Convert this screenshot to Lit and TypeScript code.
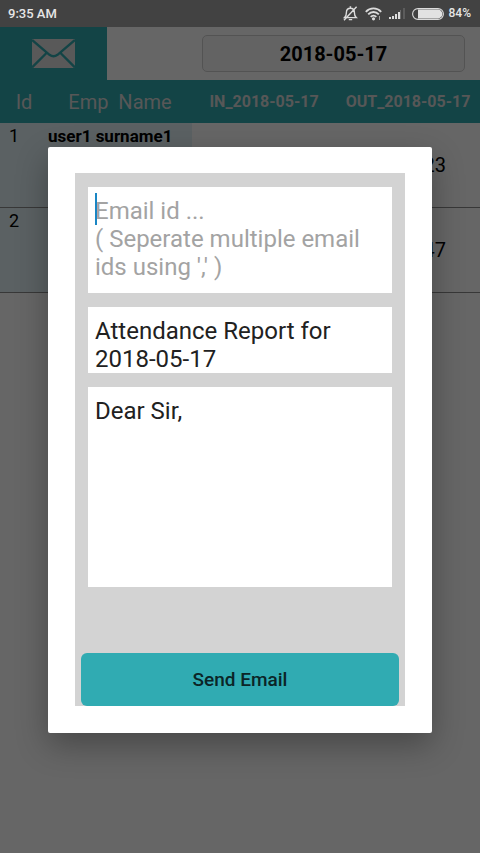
import { LitElement, html, css, svg } from "lit";
import { customElement, state } from "lit/decorators.js";

interface Row {
  id: number;
  name: string;
  inTime: string;
  outTime: string;
}

@customElement("status-bar")
export class StatusBar extends LitElement {
  static styles = css`
    :host {
      display: flex;
      align-items: center;
      justify-content: space-between;
      height: 27px;
      padding: 0 9px 0 8px;
      background: #424242;
      color: #e6e6e6;
      font: 500 12px/27px Roboto, sans-serif;
    }
    .time {
      font-size: 13px;
    }
    .icons {
      display: flex;
      align-items: center;
    }
    svg {
      display: block;
    }
    .bell,
    .wifi,
    .signal {
      margin-right: 7px;
    }
    .battery {
      margin-right: 5px;
    }
  `;

  render() {
    return html`
      <span class="time">9:35 AM</span>
      <div class="icons">
        <svg class="bell" width="15" height="15" viewBox="0 0 15 15" fill="none" stroke="#dcdcdc" stroke-width="1.4">
          <path d="M1.6 11.6C3 10.4 3.4 9.4 3.4 6.6C3.4 3.9 5 2.2 7.4 2.2C9.8 2.2 11.4 3.9 11.4 6.6C11.4 9.4 11.8 10.4 13.2 11.6Z M5.8 13.6H9.2 M6.6 1H8.2 M13.6 0.8L1 14.2" />
        </svg>
        <svg class="wifi" width="17" height="14" viewBox="0 0 17 14" fill="none" stroke="#dcdcdc" stroke-width="1.8">
          <path d="M0.8 4.8C5 0.3 12 0.3 16.2 4.8M3.2 7.4C6.2 4.2 10.8 4.2 13.8 7.4M5.7 9.9C7.3 8.2 9.7 8.2 11.3 9.9" />
          <circle cx="8.5" cy="11.8" r="1.6" fill="#dcdcdc" stroke="none" />
          <path d="M14.5 9V13" stroke-width="1" stroke="#a0a0a0" />
        </svg>
        <svg class="signal" width="16" height="12" viewBox="0 0 16 12">
          ${[2, 3, 5, 7].map(
            (h, i) => svg`<rect x=${i * 3} y=${11 - h} width="2" height=${h} fill="#dcdcdc" />`
          )}
          <rect x="11" y="2" width="1" height="9" fill="#6c6c6c" />
          <rect x="14" y="0" width="2" height="11" fill="#5c5c5c" />
        </svg>
        <svg class="battery" width="32" height="12" viewBox="0 0 32 12">
          <rect x="0.6" y="0.6" width="30.8" height="10.8" rx="5.4" fill="none" stroke="#dcdcdc" stroke-width="1.1" />
          <path d="M6 1.6H26A4.4 4.4 0 0 1 26 10.4H6Z" fill="#e2e2e2" />
        </svg>
        <span>84%</span>
      </div>
    `;
  }
}

@customElement("attendance-page")
export class AttendancePage extends LitElement {
  static styles = css`
    :host {
      display: block;
      background: #fff;
      font-family: Roboto, sans-serif;
      color: #000;
    }
    .toolbar {
      display: flex;
      justify-content: space-between;
      align-items: center;
      height: 53px;
      padding-right: 15px;
    }
    button {
      border: 0;
      padding: 0;
      font-family: inherit;
      color: inherit;
    }
    .mail {
      display: flex;
      align-items: center;
      justify-content: center;
      width: 107px;
      height: 53px;
      background: #30aab0;
    }
    .date {
      width: 263px;
      height: 37px;
      box-sizing: border-box;
      border: 1px solid #d0d0d0;
      border-radius: 5px;
      background: #f7f7f7;
      font-size: 20px;
      font-weight: 700;
    }
    table {
      width: 100%;
      table-layout: fixed;
      border-collapse: collapse;
    }
    th {
      height: 43px;
      padding: 0;
      background: #30aab0;
      color: #d9d9d9;
      font-size: 16px;
      font-weight: 700;
      white-space: pre;
    }
    th.plain {
      font-size: 20px;
      font-weight: 400;
    }
    .w-id {
      width: 10%;
    }
    td {
      height: 84px;
      padding: 0;
      border-bottom: 1px solid #8c8c8c;
      font-size: 20px;
      text-align: right;
      padding-right: 34px;
    }
    td.key {
      padding: 0;
      background: #e4f3f7;
      font-size: 18px;
      line-height: 26px;
      vertical-align: top;
      text-align: left;
    }
    td.id {
      padding-left: 9px;
    }
    td.name {
      font-size: 17px;
      font-weight: 700;
    }
  `;

  private date = "2018-05-17";
  private rows: Row[] = [
    { id: 1, name: "user1 surname1", inTime: "", outTime: "23" },
    { id: 2, name: "", inTime: "", outTime: "47" },
  ];

  render() {
    return html`
      <div class="toolbar">
        <button class="mail" aria-label="Email report">
          <svg width="43" height="29" viewBox="0 0 43 29">
            <rect width="43" height="29" fill="#dedede" />
            <path d="M0 1L17.5 15.8Q21.5 18.8 25.5 15.8L43 1M0 28.5L14.5 14M43 28.5L28.5 14" fill="none" stroke="#30aab0" stroke-width="2.4" />
          </svg>
        </button>
        <button class="date">${this.date}</button>
      </div>
      <table>
        <thead>
          <tr>
            <th class="plain w-id">Id</th>
            <th class="plain">Emp  Name</th>
            <th>IN_${this.date}</th>
            <th>OUT_${this.date}</th>
          </tr>
        </thead>
        <tbody>
          ${this.rows.map(
            (r) => html`<tr>
              <td class="key id">${r.id}</td>
              <td class="key name">${r.name}</td>
              <td>${r.inTime}</td>
              <td>${r.outTime}</td>
            </tr>`
          )}
        </tbody>
      </table>
    `;
  }
}

@customElement("email-dialog")
export class EmailDialog extends LitElement {
  static styles = css`
    :host {
      display: block;
      width: 80%;
      box-sizing: border-box;
      padding: 26px 27px 27px;
      background: #fff;
      border-radius: 2px;
      box-shadow: 0 12px 32px rgba(0, 0, 0, 0.3);
      font-family: Roboto, sans-serif;
    }
    form {
      display: flex;
      flex-direction: column;
      gap: 14px;
      padding-top: 14px;
      background: #d3d3d3;
    }
    .field {
      position: relative;
      display: block;
      margin: 0 13px;
      padding: 10px 7px 6px;
      background: #fff;
    }
    textarea {
      display: block;
      width: 100%;
      height: 90px;
      box-sizing: border-box;
      margin: 0;
      padding: 0;
      border: 0;
      outline: 0;
      resize: none;
      overflow: hidden;
      background: none;
      color: #212121;
      font: 400 24px/28px Roboto, sans-serif;
    }
    textarea::placeholder {
      color: #a3a3a3;
      opacity: 1;
    }
    .subject {
      height: 50px;
    }
    .body {
      height: 184px;
    }
    .caret {
      position: absolute;
      left: 7px;
      top: 6px;
      width: 2px;
      height: 32px;
      background: #1a86c4;
    }
    .send {
      height: 53px;
      margin: 52px 6px 0;
      padding: 0;
      border: 0;
      border-radius: 6px;
      background: #30abb2;
      color: #0b2527;
      font: 500 19px/24px Roboto, sans-serif;
    }
  `;

  @state() private recipients = "";
  @state() private subject = "Attendance Report for 2018-05-17";
  @state() private message = "Dear Sir,";

  render() {
    return html`
      <form @submit=${(e: Event) => e.preventDefault()}>
        <label class="field">
          <textarea
            aria-label="Email id"
            placeholder=${"Email id ...\n( Seperate multiple email ids using ',' )"}
            .value=${this.recipients}
          ></textarea>
          <span class="caret"></span>
        </label>
        <label class="field">
          <textarea class="subject" aria-label="Subject" .value=${this.subject}></textarea>
        </label>
        <label class="field">
          <textarea class="body" aria-label="Message" .value=${this.message}></textarea>
        </label>
        <button class="send" type="submit">Send Email</button>
      </form>
    `;
  }
}

@customElement("app-root")
export class AppRoot extends LitElement {
  static styles = css`
    :host {
      display: flex;
      flex-direction: column;
      min-height: 100vh;
    }
    main {
      position: relative;
      display: flex;
      flex: 1;
      flex-direction: column;
    }
    attendance-page {
      flex: 1;
    }
    .scrim {
      position: absolute;
      inset: 0;
      display: flex;
      align-items: center;
      justify-content: center;
      background: rgba(0, 0, 0, 0.6);
    }
  `;

  render() {
    return html`
      <status-bar></status-bar>
      <main>
        <attendance-page></attendance-page>
        <div class="scrim">
          <email-dialog role="dialog" aria-label="Send Email"></email-dialog>
        </div>
      </main>
    `;
  }
}
